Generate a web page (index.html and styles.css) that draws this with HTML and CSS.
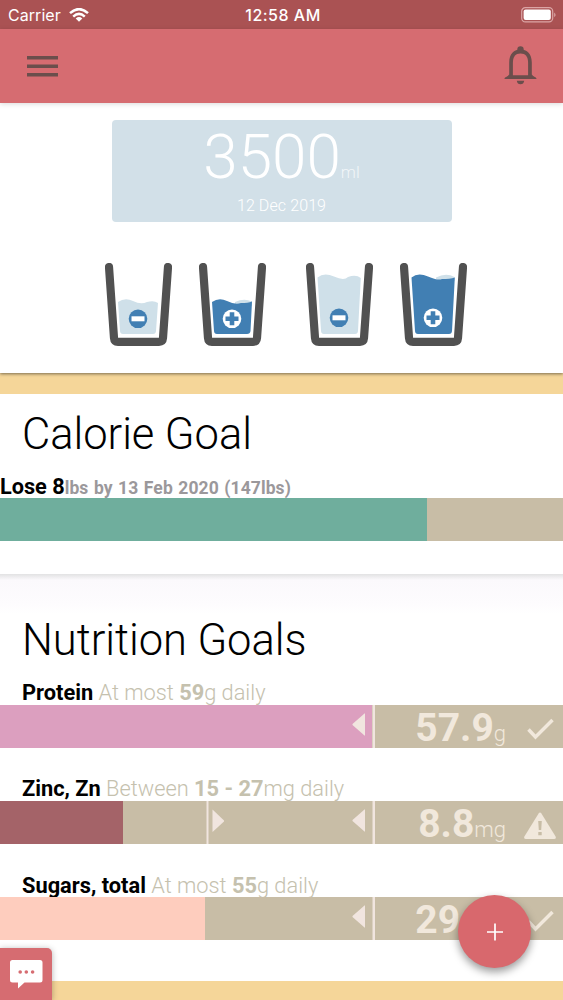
FILE: index.html
```html
<!DOCTYPE html>
<html lang="en">
<head>
  <meta charset="UTF-8">
  <title>Goals</title>
  <meta name="viewport" content="width=device-width, initial-scale=1.0">
  <link rel="stylesheet" href="styles.css">
</head>
<body>
  <div class="status">
    <div class="carrier">
      <span>Carrier</span>
      <svg width="20" height="14" viewBox="0 0 20 14" fill="none" stroke="#fff" stroke-width="2.5">
        <path d="M1 5.2Q10-3 19 5.2M4.2 8.6Q10 3.2 15.8 8.6"/>
        <path d="M10 13.8L6.7 10.5Q10 7.6 13.3 10.5Z" fill="#fff" stroke="none"/>
      </svg>
    </div>
    <div class="clock">12:58 AM</div>
    <div class="battery">
      <svg width="36" height="16" viewBox="0 0 36 16">
        <rect x=".7" y=".7" width="31" height="14.2" rx="3.6" fill="none" stroke="#dba5a5" stroke-width="1.2"/>
        <rect x="2.6" y="2.6" width="27.2" height="10.4" rx="2" fill="#fff"/>
        <path d="M33.2 5.4Q36 7.8 33.2 10.2Z" fill="#dba5a5"/>
      </svg>
    </div>
  </div>

  <header class="topbar">
    <svg width="31" height="21" viewBox="0 0 31 21" fill="#6b4e4c">
      <path d="M0 0h31v3.6H0zM0 8.5h31v3.6H0zM0 17h31v3.6H0z"/>
    </svg>
    <svg class="bell" width="33" height="39" viewBox="0 0 33 39">
      <path d="M5.200 28.500V16.500C5.200 8 10 3.600 16.500 3.600S27.800 8 27.800 16.500V28.500C29.500 31 32.500 31 32.500 33H.5C.5 31 3.500 31 5.200 28.500ZM12.800 34.700H20.200Q19.700 38.300 16.500 38.300T12.800 34.700Z" fill="#6b4e4c"/>
      <circle cx="16.500" cy="3.400" r="3.200" fill="#6b4e4c"/>
      <path d="M8.900 29.200V17C8.900 10.500 11.500 7.400 16.500 7.400S24.100 10.500 24.100 17V29.200Z" fill="#d66c71"/>
    </svg>
  </header>

  <main>
    <section class="card water">
      <div class="total">
        <div class="amount">3500<small>ml</small></div>
        <div class="date">12 Dec 2019</div>
      </div>
      <div class="glasses">
        <svg class="glass" viewBox="0 0 67 84">
          <path class="wall" d="M4 4L9 75Q9.300 78.800 13 78.800H54Q57.700 78.800 58 75L63 4"/>
          <path class="pale" d="M13 39Q20 34 28 38T42 39Q49 37 53 40L51 68Q50.800 71 48 71H18Q15.200 71 15 68Z"/>
          <circle class="blue" cx="33" cy="55.800" r="9.300"/>
          <path class="white" d="M26.500 53.300H39.500V58.300H26.500Z"/>
        </svg>
        <svg class="glass" viewBox="0 0 67 84">
          <path class="wall" d="M4 4L9 75Q9.300 78.800 13 78.800H54Q57.700 78.800 58 75L63 4"/>
          <path class="pale" d="M36 39Q45 35 53 38.500V43H36Z"/>
          <path class="blue" d="M13 39Q20 34 28 38T42 40Q49 40 53 38.500L51.500 68Q51.200 71 48 71H18Q15.200 71 15 68Z"/>
          <circle class="white" cx="33" cy="55.800" r="9.300"/>
          <path class="blue" d="M30.700 49.300H35.300V53.500H39.500V58.100H35.300V62.300H30.700V58.100H26.500V53.500H30.700Z"/>
        </svg>
        <svg class="glass large" viewBox="0 0 67 84">
          <path class="wall" d="M4 4L9 75Q9.300 78.800 13 78.800H54Q57.700 78.800 58 75L63 4"/>
          <path class="pale" d="M11.500 14.500Q18 9 28 13.500T42 14Q50 11 54.800 15L52 68Q51.800 71 49 71H18Q15.200 71 15 68Z"/>
          <circle class="blue" cx="33" cy="54.800" r="9.300"/>
          <path class="white" d="M26.500 52.300H39.500V57.300H26.500Z"/>
        </svg>
        <svg class="glass" viewBox="0 0 67 84">
          <path class="wall" d="M4 4L9 75Q9.300 78.800 13 78.800H54Q57.700 78.800 58 75L63 4"/>
          <path class="pale" d="M36 14.500Q46 9.500 54.500 14V18H36Z"/>
          <path class="blue" d="M11.500 14.500Q18 9 28 13.500T42 16Q50 16 54.800 14.500L52 68Q51.800 71 49 71H18Q15.200 71 15 68Z"/>
          <circle class="white" cx="33" cy="54.800" r="9.300"/>
          <path class="blue" d="M30.700 48.300H35.300V52.500H39.500V57.100H35.300V61.300H30.700V57.100H26.500V52.500H30.700Z"/>
        </svg>
      </div>
    </section>

    <section class="card calories">
      <h1>Calorie Goal</h1>
      <p class="target"><b>Lose 8</b><span>lbs by 13 Feb 2020 (147lbs)</span></p>
      <div class="bar"><div class="fill green" style="width: 427px"></div></div>
    </section>

    <section class="card nutrition">
      <h1>Nutrition Goals</h1>

      <div class="goal">
        <p class="label"><strong>Protein</strong> At most <b>59</b>g daily</p>
        <div class="bar">
          <div class="fill pink" style="width: 372px"></div>
          <svg class="marks" viewBox="0 0 563 43"><path d="M352.500 19L364.500 8.500Q365 8 365 9V30Q365 31 364.500 30.500L352.500 20Z"/><path d="M372.500 0h2.500v43h-2.500z"/></svg>
          <div class="value">57.9<small>g</small></div>
          <svg class="state" viewBox="0 0 32 32"><path class="check" d="M4.500 15.500L11.500 23L28.500 6"/></svg>
        </div>
      </div>

      <div class="goal">
        <p class="label"><strong>Zinc, Zn</strong> Between <b>15 - 27</b>mg daily</p>
        <div class="bar">
          <div class="fill maroon" style="width: 123px"></div>
          <svg class="marks" viewBox="0 0 563 43"><path d="M224 19.500L212.500 8.500V31L224 20.500Z"/><path d="M206.500 0h2v43h-2z"/><path d="M352.500 19L364.500 8.500Q365 8 365 9V30Q365 31 364.500 30.500L352.500 20Z"/><path d="M372.500 0h2.500v43h-2.500z"/></svg>
          <div class="value">8.8<small>mg</small></div>
          <svg class="state" viewBox="0 0 32 32"><path d="M14.600 3.500Q16 1.500 17.400 3.500L31.600 26.500Q32.500 29 30 29H2Q-.5 29 .4 26.500Z"/><path class="bang" d="M14.200 11h3.600l-.6 9h-2.400zM14.300 22h3.400v3.200h-3.400z"/></svg>
        </div>
      </div>

      <div class="goal">
        <p class="label"><strong>Sugars, total</strong> At most <b>55</b>g daily</p>
        <div class="bar">
          <div class="fill peach" style="width: 204.500px"></div>
          <svg class="marks" viewBox="0 0 563 43"><path d="M352.500 19L364.500 8.500Q365 8 365 9V30Q365 31 364.500 30.500L352.500 20Z"/><path d="M372.500 0h2.500v43h-2.500z"/></svg>
          <div class="value">29.1<small>g</small></div>
          <svg class="state" viewBox="0 0 32 32"><path class="check" d="M4.500 15.500L11.500 23L28.500 6"/></svg>
        </div>
      </div>
    </section>
  </main>

  <button class="chat" aria-label="Chat">
    <svg width="33" height="29" viewBox="0 0 33 29">
      <path d="M2.500 0H30Q32.500 0 32.500 2.500V20Q32.500 22.500 30 22.500H14.500L8 28.500V22.500H2.500Q0 22.500 0 20V2.500Q0 0 2.500 0Z" fill="#fff"/>
      <g fill="#d66c71"><circle cx="10.200" cy="12" r="1.800"/><circle cx="16.300" cy="12" r="1.800"/><circle cx="22.600" cy="12" r="1.800"/></g>
    </svg>
  </button>
  <button class="add" aria-label="Add">
    <svg width="16" height="18" viewBox="0 0 16 18" stroke="#fff" stroke-width="1.700"><path d="M0 9H16M8 .5V17.500"/></svg>
  </button>
</body>
</html>
```
FILE: styles.css
```css
* {
  box-sizing: border-box;
}

body {
  margin: 0;
  width: 563px;
  height: 1000px;
  overflow: hidden;
  background: #f5d699;
  color: #000;
  font-family: Roboto, "Open Sans", sans-serif;
}

h1, p {
  margin: 0;
}

button {
  border: none;
  padding: 0;
}

.status {
  height: 29px;
  background: #aa5253;
  color: #fff;
  display: grid;
  grid-template-columns: 1fr auto 1fr;
  align-items: center;
  padding: 0 6px 0 8px;
  font-family: Inter, sans-serif;
  font-size: 16px;
}

.carrier {
  display: flex;
  align-items: center;
  gap: 8px;
  letter-spacing: 0.05px;
}

.clock {
  padding-left: 1px;
  font-weight: 500;
  letter-spacing: 0.5px;
}

.battery {
  display: flex;
  justify-content: flex-end;
}

.topbar {
  height: 74px;
  background: #d66c71;
  display: flex;
  align-items: center;
  justify-content: space-between;
  padding: 0 25px 0 27px;
  position: relative;
  box-shadow: 0 1px 5px rgba(0, 0, 0, 0.15);
}

.bell {
  margin-right: 1px;
  margin-bottom: 2px;
}

.card {
  background: #fff;
}

.water {
  height: 270px;
  padding-top: 17px;
  box-shadow: 0 1px 3px rgba(0, 0, 0, 0.5);
}

.total {
  width: 340px;
  height: 102px;
  margin: 0 auto;
  border-radius: 4px;
  background: #d2e0e8;
  color: #fff;
  text-align: center;
}

.amount {
  height: 73px;
  font-size: 62px;
  font-weight: 300;
  line-height: 73px;
}

.amount small {
  font-size: 17px;
  opacity: 0.7;
}

.date {
  font-size: 16px;
  font-weight: 300;
  line-height: 25px;
  letter-spacing: 0.1px;
}

.glasses {
  display: flex;
  gap: 27px;
  padding: 41px 0 0 105px;
}

.glass {
  width: 67px;
  height: 84px;
}

.large {
  margin-left: 13px;
}

.wall {
  fill: none;
  stroke: #515151;
  stroke-width: 8.2;
  stroke-linecap: round;
}

.pale {
  fill: #cfe0e9;
}

.blue {
  fill: #417fb3;
}

.white {
  fill: #fff;
}

h1 {
  height: 52px;
  padding-left: 22px;
  font-size: 43.5px;
  font-weight: 300;
  line-height: 54px;
  letter-spacing: -0.05px;
}

.calories {
  height: 180px;
  margin-top: 21px;
  padding-top: 14px;
}

.target {
  height: 38px;
  padding-top: 15px;
  line-height: 24px;
  font-size: 21.7px;
  white-space: nowrap;
}

.target span {
  color: #9b989b;
  font-size: 17.5px;
  font-weight: 700;
  letter-spacing: 0.1px;
  word-spacing: 1px;
}

.bar {
  height: 43px;
  background: #c8bda6;
  position: relative;
}

.fill {
  height: 100%;
}

.green {
  background: #6fae9d;
}

.pink {
  background: #dc9fbf;
}

.maroon {
  background: #a46368;
}

.peach {
  background: #fecdbe;
}

.nutrition {
  height: 407px;
  padding-top: 40px;
  background: linear-gradient(#e2e2e3, #fbf9fc 6px, #fdfcfe 30px, #fff 40px);
}

.goal {
  height: 96.4px;
}

.label {
  height: 38.5px;
  padding: 15px 0 0 22px;
  color: #c5c1ae;
  font-size: 21.8px;
  font-weight: 300;
  line-height: 24px;
  white-space: nowrap;
}

.label strong {
  color: #000;
  font-weight: 700;
}

.label b {
  font-weight: 700;
}

.marks {
  position: absolute;
  top: 0;
  left: 0;
  width: 563px;
  height: 43px;
  fill: #f1e5df;
}

.value {
  position: absolute;
  top: 0;
  right: 57px;
  color: #f1e8dc;
  font-size: 39px;
  font-weight: 700;
  line-height: 46px;
}

.value small {
  font-size: 22px;
  font-weight: 300;
}

.state {
  position: absolute;
  top: 9px;
  right: 7px;
  width: 32px;
  height: 32px;
  fill: #f1e8dc;
}

.check {
  fill: none;
  stroke: #f1e8dc;
  stroke-width: 3.5;
}

.bang {
  fill: #c8bda6;
}

.chat {
  position: absolute;
  left: 0;
  top: 948px;
  width: 52px;
  height: 52px;
  border-radius: 0 5px 0 0;
  background: #d66c71;
  box-shadow: 0 1px 6px rgba(0, 0, 0, 0.3);
  display: flex;
  align-items: center;
  justify-content: center;
}

.add {
  position: absolute;
  left: 458px;
  top: 895px;
  width: 73px;
  height: 73px;
  border-radius: 50%;
  background: #d8686d;
  box-shadow: 0 4px 8px rgba(0, 0, 0, 0.4);
  display: flex;
  align-items: center;
  justify-content: center;
}
```
